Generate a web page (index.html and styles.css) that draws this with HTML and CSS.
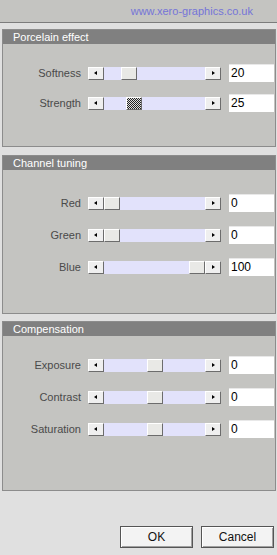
FILE: index.html
```html
<!DOCTYPE html>
<html lang="en">
  <head>
    <meta charset="utf-8" />
    <title>Porcelain</title>
    <link rel="stylesheet" href="styles.css">
  </head>
  <body>
    <div class="header">
      <span class="site">www.xero-graphics.co.uk</span>
    </div>

    <div class="panel panel-porcelain">
      <div class="panel-title">Porcelain effect</div>
      <div class="panel-body">
        <div class="row">
          <span class="label">Softness</span>
          <div class="scroll">
            <span class="arrow left"></span>
            <div class="track"><span class="thumb" style="left: 17px"></span></div>
            <span class="arrow right"></span>
          </div>
          <span class="value">20</span>
        </div>
        <div class="row">
          <span class="label">Strength</span>
          <div class="scroll">
            <span class="arrow left"></span>
            <div class="track"><span class="thumb focused" style="left: 22px"></span></div>
            <span class="arrow right"></span>
          </div>
          <span class="value">25</span>
        </div>
      </div>
    </div>

    <div class="panel panel-channel">
      <div class="panel-title">Channel tuning</div>
      <div class="panel-body">
        <div class="row">
          <span class="label">Red</span>
          <div class="scroll">
            <span class="arrow left"></span>
            <div class="track"><span class="thumb" style="left: 0px"></span></div>
            <span class="arrow right"></span>
          </div>
          <span class="value">0</span>
        </div>
        <div class="row">
          <span class="label">Green</span>
          <div class="scroll">
            <span class="arrow left"></span>
            <div class="track"><span class="thumb" style="left: 0px"></span></div>
            <span class="arrow right"></span>
          </div>
          <span class="value">0</span>
        </div>
        <div class="row">
          <span class="label">Blue</span>
          <div class="scroll">
            <span class="arrow left"></span>
            <div class="track"><span class="thumb" style="left: 85px"></span></div>
            <span class="arrow right"></span>
          </div>
          <span class="value">100</span>
        </div>
      </div>
    </div>

    <div class="panel panel-comp">
      <div class="panel-title">Compensation</div>
      <div class="panel-body">
        <div class="row">
          <span class="label">Exposure</span>
          <div class="scroll">
            <span class="arrow left"></span>
            <div class="track"><span class="thumb" style="left: 43px"></span></div>
            <span class="arrow right"></span>
          </div>
          <span class="value">0</span>
        </div>
        <div class="row">
          <span class="label">Contrast</span>
          <div class="scroll">
            <span class="arrow left"></span>
            <div class="track"><span class="thumb" style="left: 43px"></span></div>
            <span class="arrow right"></span>
          </div>
          <span class="value">0</span>
        </div>
        <div class="row">
          <span class="label">Saturation</span>
          <div class="scroll">
            <span class="arrow left"></span>
            <div class="track"><span class="thumb" style="left: 43px"></span></div>
            <span class="arrow right"></span>
          </div>
          <span class="value">0</span>
        </div>
      </div>
    </div>

    <div class="buttons">
      <button class="btn">OK</button>
      <button class="btn">Cancel</button>
    </div>
  </body>
</html>
```

FILE: styles.css
```css
body {
  font-family: "Liberation Sans", Arial, sans-serif;
  font-size: 11px;
  margin: 0;
  width: 277px;
  height: 555px;
  background-color: #e0e0e0;
  display: flex;
  flex-direction: column;
}

.header {
  height: 22px;
  background-color: #c4c4c1;
  border-bottom: 1px solid #7c7c7c;
  display: flex;
  justify-content: flex-end;
  align-items: flex-end;
  padding-right: 24px;
}
.site {
  color: #7474d8;
  line-height: 13px;
  padding-bottom: 4px;
}

/* dialog group boxes */
.panel {
  margin: 0 1px 0 2px;
  background-color: #c4c4c1;
  border: 1px solid #8c8c8c;
  box-sizing: border-box;
}
.panel-porcelain {
  margin-top: 6px;
  height: 118px;
}
.panel-channel {
  margin-top: 8px;
  height: 159px;
}
.panel-comp {
  margin-top: 7px;
  height: 170px;
}
.panel-title {
  height: 14px;
  line-height: 14px;
  background-color: #808080;
  color: #fff;
  padding-left: 10px;
}
.panel-body {
  display: flex;
  flex-direction: column;
  gap: 14px;
  padding-top: 20px;
}
.panel-porcelain .panel-body {
  gap: 12px;
}
.panel-channel .panel-body {
  padding-top: 24px;
}

.row {
  display: flex;
  align-items: center;
  height: 18px;
}
.label {
  width: 79px;
  text-align: right;
  color: #4a4a4a;
  padding-right: 1px;
  box-sizing: border-box;
}

.scroll {
  margin-left: 6px;
  width: 133px;
  height: 13px;
  display: flex;
}
.arrow,
.thumb {
  width: 16px;
  height: 13px;
  box-sizing: border-box;
  background-color: #efefef;
  border: 1px solid;
  border-color: #fff #6c6c6c #6c6c6c #fff;
  position: relative;
  display: block;
}
.arrow::after {
  content: "";
  position: absolute;
  top: 3px;
  border-top: 2.5px solid transparent;
  border-bottom: 2.5px solid transparent;
}
.arrow.left::after {
  left: 5px;
  border-right: 3px solid #000;
}
.arrow.right::after {
  left: 6px;
  border-left: 3px solid #000;
}
.track {
  flex: 1;
  background-color: #e2e2fb;
  position: relative;
}
.thumb {
  position: absolute;
  top: 0;
  background-color: #e9e9e6;
}
.thumb.focused {
  background: repeating-conic-gradient(#222 0 25%, #ddd 0 50%) 0 0 / 2px 2px;
}

.value {
  margin-left: 8px;
  width: 45px;
  height: 18px;
  box-sizing: border-box;
  background-color: #fff;
  border-top: 1px solid #e8e8e8;
  padding-left: 2px;
  font-size: 12px;
  line-height: 17px;
  color: #000;
}

.buttons {
  margin-top: 35px;
  display: flex;
  justify-content: flex-end;
  gap: 8px;
  padding-right: 3px;
}
.btn {
  width: 73px;
  height: 22px;
  font-family: "Liberation Sans", Arial, sans-serif;
  font-size: 12px;
  color: #111;
  background-color: #f3f3f3;
  border: 1px solid #555;
  box-shadow: inset 1px 1px 0 #fff, inset -1px -1px 0 #a0a0a0;
  padding: 0;
}
```
